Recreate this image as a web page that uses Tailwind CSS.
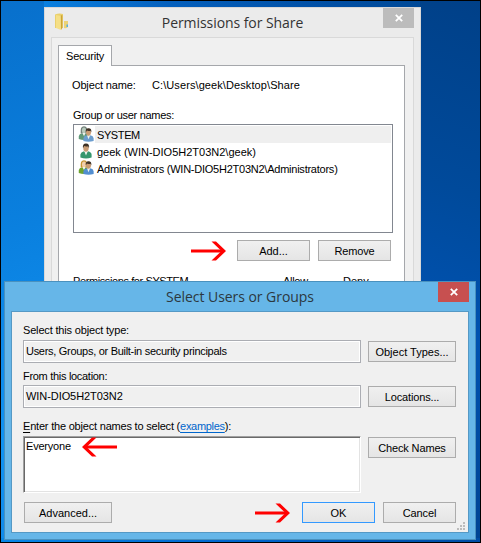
<!DOCTYPE html>
<html lang="en">
<head>
<meta charset="utf-8">
<title>Permissions for Share</title>
<script src="https://cdn.jsdelivr.net/npm/@tailwindcss/browser@4"></script>
</head>
<body>
<svg class="hidden">
  <defs>
    <linearGradient id="gold"><stop offset="0" stop-color="#f9e99d"/><stop offset="1" stop-color="#dfb83f"/></linearGradient>
    <symbol id="arrow" viewBox="0 0 36 20"><path d="M0 10H32" fill="none" stroke="#f00" stroke-width="3"/><path d="M20.5 .5H25L35 10L25 19.5H20.5L30.5 10Z" fill="#f00"/></symbol>
    <symbol id="close" viewBox="0 0 8 8"><path d="M.8 .8L7.2 7.2M7.2 .8L.8 7.2" stroke="#fff" stroke-width="1.8"/></symbol>
    <symbol id="person" viewBox="0 0 12 15">
      <path d="M.4 14V11Q.8 8.5 4 7.8L6 9.5L8 7.8Q11.3 8.5 11.6 11V14Q6 15.8 .4 14Z" fill="currentColor"/>
      <path d="M4.3 7.8L6 12L7.8 7.8Z" fill="#eef4ee"/>
      <ellipse cx="6" cy="4.5" rx="2.7" ry="3.8" fill="#c99c74"/>
      <path d="M3 4.8Q2.2 .3 6 .1Q9.8 .2 9 4.8L8.2 2.8Q5.5 3.4 4.2 2.6Z" fill="#3d3024"/>
    </symbol>
    <symbol id="woman" viewBox="0 0 12 15">
      <path d="M.4 14V11Q.8 8.5 4 7.8L6 9.5L8 7.8Q11.3 8.5 11.6 11V14Q6 15.8 .4 14Z" fill="currentColor"/>
      <path d="M2.5 8Q1.5 .3 6 .2Q10.7 .4 9.5 8Z" fill="var(--hair)"/>
      <ellipse cx="6" cy="4.8" rx="2.2" ry="3.2" fill="var(--face)"/>
      <path d="M4.5 7.5L6 11L7.5 7.5Z" fill="#eef4ee"/>
    </symbol>
  </defs>
</svg>
<main class="relative w-[481px] h-[543px] overflow-hidden border border-black font-['Liberation_Sans',Arial,sans-serif] text-[11px] leading-[14px] text-black whitespace-nowrap bg-[linear-gradient(90deg,#087bdb_0%,#0a80e0_9%,#0560bd_35%,#004ea3_70%,#00468f_100%)]">
  <div class="absolute inset-y-0 left-0 w-[43px] bg-[linear-gradient(165deg,#0870cc_0%,#0a80df_42%,#1193f2_80%,#1089e9_100%)]"></div>
  <div class="absolute inset-y-0 right-0 w-[60px] bg-[linear-gradient(200deg,#004088_0%,#004a9b_35%,#0052b0_60%,#004391_100%)]"></div>
  <div class="absolute inset-x-0 bottom-0 h-[4px] bg-[linear-gradient(90deg,#0786e6,#0065cc_50%,#004da5)]"></div>

  <!-- Permissions window -->
  <section class="absolute left-[43px] top-[6px] w-[377px] h-[290px] border border-[#d8d8d8] bg-[#ebebeb]">
    <header class="relative h-[29px] flex justify-center">
      <svg class="absolute left-[10px] top-[5px]" width="14" height="18" viewBox="0 0 14 18">
        <path d="M0 1.5Q4 0 8 1V15H0Z" fill="#ead06c"/><path d="M7 1Q11 0 12 2V14H7Z" fill="url(#gold)"/>
        <path d="M1 2L6 3V17L1 15Z" fill="#f5df86"/><path d="M5.8 2.5L7.3 2V15L6 17Z" fill="#cba338"/>
        <path d="M9 8H13V14Q11 16 9 15Z" fill="#ecd376"/><path d="M11.5 11.5H13V14H11.5Z" fill="#55aee0"/>
      </svg>
      <h1 class="font-['Open_Sans',sans-serif] text-[14px] leading-[20px] mt-[5px] tracking-[-0.07px] text-[#333]">Permissions for Share</h1>
      <button class="absolute right-[6px] top-0 w-[31px] h-[20px] bg-[#bcbcbc] flex items-center justify-center"><svg width="8" height="8"><use href="#close"/></svg></button>
    </header>
    <div class="mx-[6px] h-[260px] border border-[#d9d9d9] bg-[#f0f0f0] pl-[6px] pr-[8px] pt-[7px]">
      <div class="relative z-10 -mb-px w-[54px] h-[21px] border border-b-0 border-[#a5a7ab] bg-white pt-[3px] pl-[7px] tracking-[-0.2px]">Security</div>
      <div class="h-[240px] w-[347px] border border-[#a5a7ab] bg-white pl-[14px] pt-[12px]">
        <div class="flex h-[30px]"><span class="w-[79px] -ml-px mr-px tracking-[-0.15px]">Object name:</span><span class="tracking-[0.09px]">C:\Users\geek\Desktop\Share</span></div>
        <div class="h-[16px] tracking-[-0.3px]">Group or user names:</div>
        <div class="w-[320px] h-[109px] border border-[#828790] pt-px pr-px pl-[4px]">
          <div class="flex h-[17px]"><span class="relative w-[17px] text-[#5f9978] [--hair:#718079] [--face:#b8cabc]"><svg class="absolute left-0 top-0" width="12" height="14"><use href="#woman"/></svg><svg class="absolute left-[5px] top-[2px] text-[#6b9dce]" width="11" height="14"><use href="#person"/></svg></span><span class="flex-1 bg-[#efefef] pl-[2px] pt-[2px] tracking-[-0.4px]">SYSTEM</span></div>
          <div class="flex h-[17px]"><span class="w-[19px] pl-[2px] text-[#36966d]"><svg width="12" height="16"><use href="#person"/></svg></span><span class="pt-[2px]">geek (WIN-DIO5H2T03N2\geek)</span></div>
          <div class="flex h-[17px]"><span class="relative w-[19px] text-[#6da32f] [--hair:#c79632] [--face:#f2cfaa]"><svg class="absolute left-0 top-0" width="12" height="14"><use href="#woman"/></svg><svg class="absolute left-[5px] top-[1px] text-[#528ed0]" width="11" height="14"><use href="#person"/></svg></span><span class="pt-[2px] tracking-[-0.24px]">Administrators (WIN-DIO5H2T03N2\Administrators)</span></div>
        </div>
        <div class="mt-[7px] ml-[118px] flex items-center gap-[10px]">
          <svg class="w-[36px] h-[20px]"><use href="#arrow"/></svg>
          <div class="flex gap-[8px]"><button class="w-[73px] h-[21px] border border-[#acacac] bg-linear-to-b from-[#f0f0f0] to-[#e5e5e5]">Add...</button><button class="w-[73px] h-[21px] border border-[#acacac] bg-linear-to-b from-[#f0f0f0] to-[#e5e5e5] tracking-[-0.2px]">Remove</button></div>
        </div>
        <div class="mt-[13px] flex"><span class="w-[210px] tracking-[-0.4px]">Permissions for SYSTEM</span><span class="w-[60px] tracking-[-0.3px]">Allow</span><span>Deny</span></div>
      </div>
    </div>
  </section>

  <!-- Select users dialog -->
  <section class="absolute left-[3px] top-[280px] w-[472px] h-[259px] border border-[#4a91be] bg-[#66b6e8]">
    <header class="relative h-[29px] flex justify-center">
      <h2 class="font-['Open_Sans',sans-serif] text-[14px] leading-[20px] mt-[5px] tracking-[-0.05px] text-[#2c3840]">Select Users or Groups</h2>
      <button class="absolute right-[6px] top-0 w-[31px] h-[20px] bg-[#c75050] flex items-center justify-center"><svg width="8" height="8"><use href="#close"/></svg></button>
    </header>
    <div class="relative mx-[6px] h-[222px] border border-[#5599c5] bg-[#f0f0f0] pl-[11px] pt-[11px]">
      <div class="tracking-[-0.17px]">Select this object type:</div>
      <div class="mt-[3px] flex gap-[7px]"><div class="w-[338px] h-[23px] border border-[#abadb3] shadow-[inset_0_0_0_1px_#fff] pl-[2px] pt-[3px] tracking-[-0.29px]">Users, Groups, or Built-in security principals</div><button class="mt-px w-[88px] h-[21px] border border-[#acacac] bg-linear-to-b from-[#f0f0f0] to-[#e5e5e5]">Object Types...</button></div>
      <div class="mt-[6px] tracking-[-0.3px]">From this location:</div>
      <div class="mt-[2px] flex gap-[7px]"><div class="w-[338px] h-[23px] border border-[#abadb3] shadow-[inset_0_0_0_1px_#fff] pl-[2px] pt-[3px] tracking-[-0.07px]">WIN-DIO5H2T03N2</div><button class="mt-px w-[88px] h-[21px] border border-[#acacac] bg-linear-to-b from-[#f0f0f0] to-[#e5e5e5] tracking-[-0.15px]">Locations...</button></div>
      <div class="mt-[11px] tracking-[-0.2px]"><span class="underline underline-offset-2">E</span>nter the object names to select (<a class="text-[#0066cc] underline underline-offset-2 tracking-[-0.3px]">examples</a>):</div>
      <div class="mt-[3px] flex gap-[7px]"><div class="flex w-[338px] h-[57px] border border-t-[#a0a0a0] border-l-[#a0a0a0] border-r-white border-b-white bg-white shadow-[inset_1px_1px_0_#696969,inset_-1px_-1px_0_#e3e3e3] pl-[2px]"><span class="w-[55px] pt-[2px] tracking-[-0.2px]">Everyone</span><svg class="w-[36px] h-[20px] -scale-x-100"><use href="#arrow"/></svg></div><button class="mt-px w-[88px] h-[21px] border border-[#acacac] bg-linear-to-b from-[#f0f0f0] to-[#e5e5e5] tracking-[-0.15px]">Check Names</button></div>
      <div class="ml-px mt-[9px] flex items-center">
        <button class="w-[88px] h-[21px] border border-[#acacac] bg-linear-to-b from-[#f0f0f0] to-[#e5e5e5]">Advanced...</button>
        <svg class="ml-[143px] mr-[11px] mt-px w-[36px] h-[20px]"><use href="#arrow"/></svg>
        <button class="w-[73px] h-[21px] border border-[#3399ff] bg-linear-to-b from-[#f0f0f0] to-[#e5e5e5]">OK</button>
        <button class="ml-[8px] w-[73px] h-[21px] border border-[#acacac] bg-linear-to-b from-[#f0f0f0] to-[#e5e5e5] tracking-[-0.1px]">Cancel</button>
      </div>
      <svg class="absolute right-[3px] bottom-[2px]" width="8" height="8" fill="#bcbcbc"><path d="M6 0h2v2H6zM3 3h2v2H3zM6 3h2v2H6zM0 6h2v2H0zM3 6h2v2H3zM6 6h2v2H6z"/></svg>
    </div>
  </section>
</main>
</body>
</html>
